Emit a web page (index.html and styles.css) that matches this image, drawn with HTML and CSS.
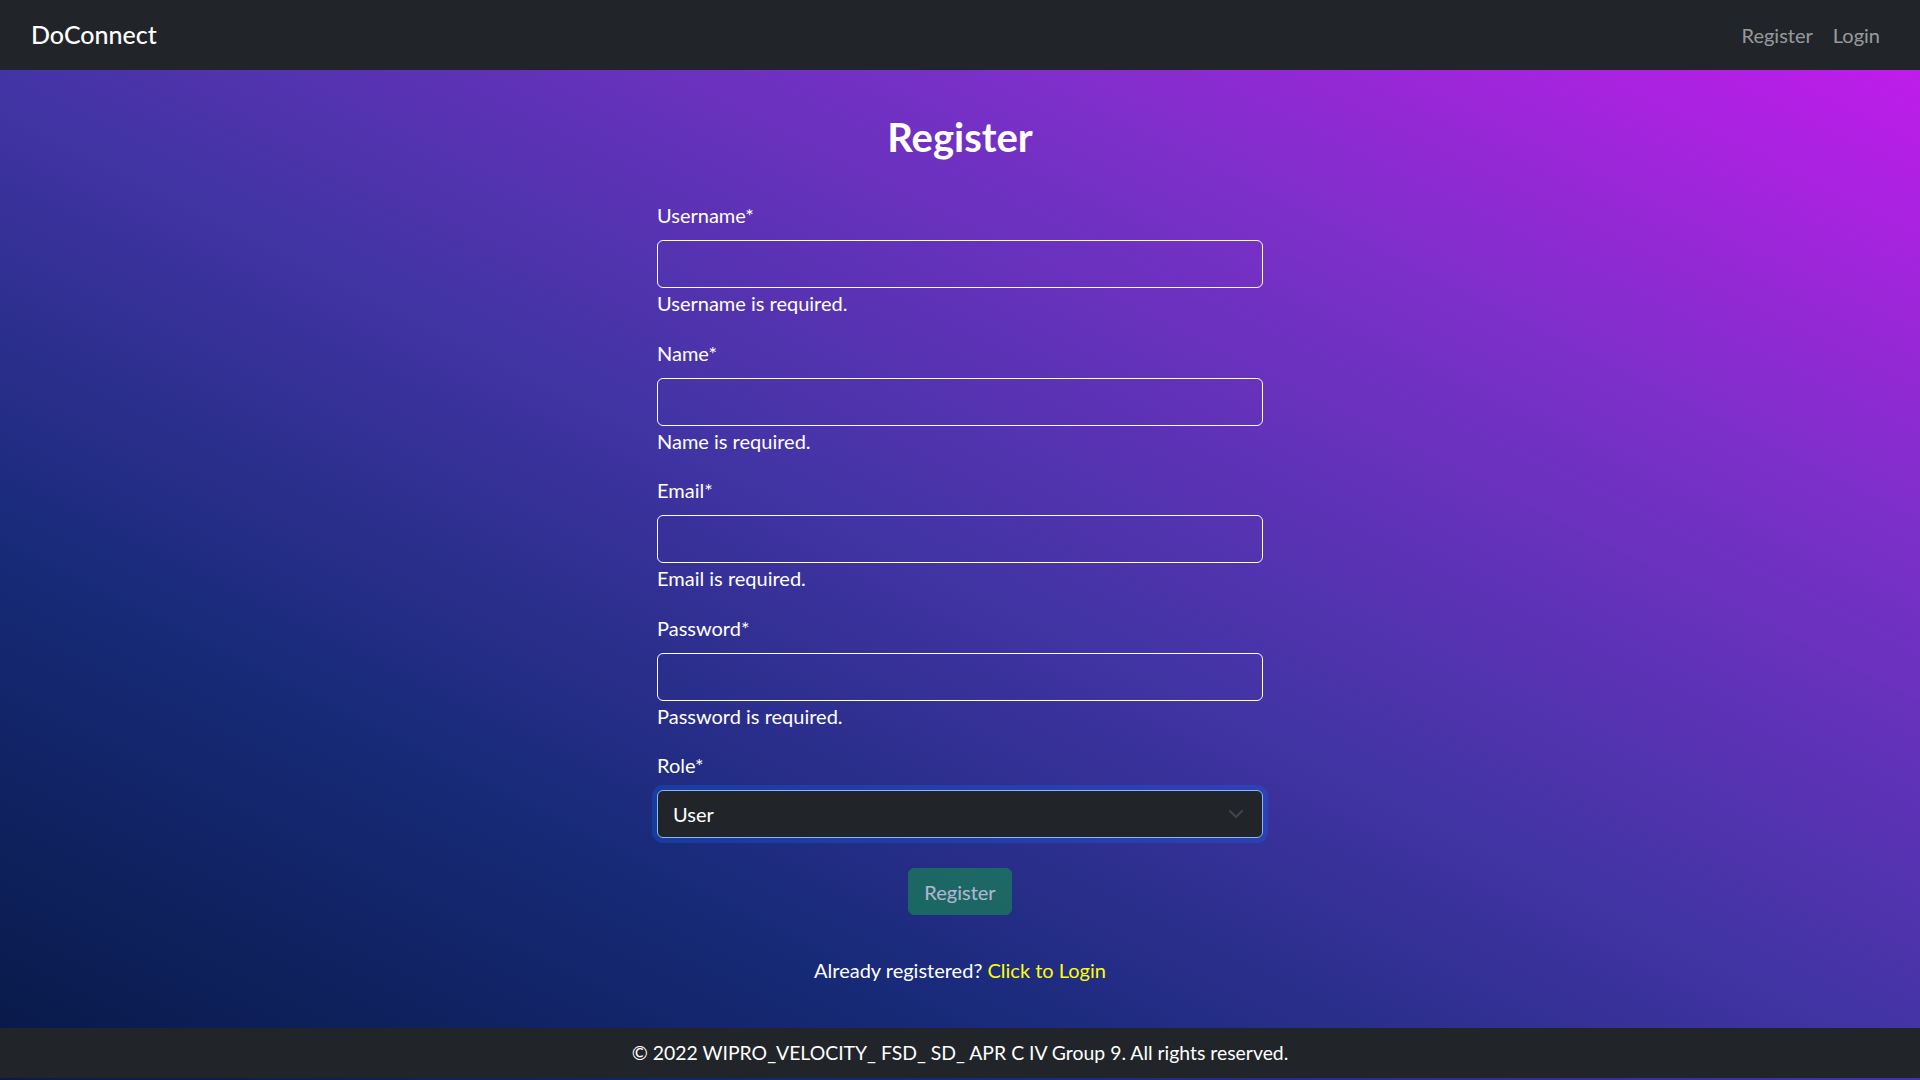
FILE: index.html
```html
<!DOCTYPE html>
<html lang="en">
<head>
<meta charset="utf-8">
<title>DoConnect</title>
<link rel="stylesheet" href="styles.css">
</head>
<body>
<nav class="navbar">
  <a class="brand" href="#">DoConnect</a>
  <div class="nav-links">
    <a class="nav-link" href="#">Register</a>
    <a class="nav-link" href="#">Login</a>
  </div>
</nav>
<main class="main">
  <h2 class="title">Register</h2>
  <form class="form">
    <div class="field">
      <label class="label">Username*</label>
      <input class="input" type="text">
      <div class="error">Username is required.</div>
    </div>
    <div class="field">
      <label class="label">Name*</label>
      <input class="input" type="text">
      <div class="error">Name is required.</div>
    </div>
    <div class="field">
      <label class="label">Email*</label>
      <input class="input" type="text">
      <div class="error">Email is required.</div>
    </div>
    <div class="field">
      <label class="label">Password*</label>
      <input class="input" type="password">
      <div class="error">Password is required.</div>
    </div>
    <div class="field">
      <label class="label">Role*</label>
      <div class="select">
        <span>User</span>
        <svg class="chev" width="16" height="16" viewBox="0 0 16 16"><path d="M2 5l6 6 6-6" fill="none" stroke="#3f454c" stroke-width="2" stroke-linecap="round" stroke-linejoin="round"/></svg>
      </div>
    </div>
    <div class="actions">
      <button class="btn" type="button" disabled>Register</button>
    </div>
    <p class="already">Already registered? <a class="login-link" href="#">Click to Login</a></p>
  </form>
</main>
<footer class="footer">© 2022 WIPRO_VELOCITY_ FSD_ SD_ APR C IV Group 9. All rights reserved.</footer>
<div class="tail"></div>
</body>
</html>
```
FILE: styles.css
```css
* { box-sizing: border-box; }
html, body { margin: 0; padding: 0; }
body {
  font-family: "Lato", "Open Sans", sans-serif;
  font-size: 20px;
  line-height: 1.5;
  color: #fff;
  background: linear-gradient(to top right, #091a4a 0%, #172a78 25%, #4434a6 50%, #7a30c8 75%, #c01ceb 100%);
  min-height: 1080px;
}
.navbar {
  height: 70px;
  background: #212529;
  display: flex;
  align-items: center;
  justify-content: space-between;
  padding: 0 30px 0 31px;
}
.brand {
  color: #fff;
  text-decoration: none;
  font-size: 25px;
  font-weight: 500;
}
.nav-links { display: flex; }
.nav-link {
  color: rgba(255,255,255,0.55);
  text-decoration: none;
  font-size: 20px;
  padding: 0 10px;
}
.main {
  height: 958px;
  padding-top: 43px;
  background: linear-gradient(to top right, #091a4a 0%, #172a78 25%, #4434a6 50%, #7a30c8 75%, #c01ceb 100%);
}
.title {
  margin: 0;
  text-align: center;
  font-size: 40px;
  line-height: 48px;
  font-weight: 700;
}
.form {
  width: 606px;
  margin: 39px auto 0;
}
.field {
  margin-bottom: 19.5px;
  display: flex;
  flex-direction: column;
}
.label {
  line-height: 30px;
  margin-bottom: 10px;
}
.input {
  height: 48px;
  background: transparent;
  border: 1px solid #fff;
  border-radius: 6px;
  font: inherit;
  color: #fff;
  padding: 0 15px;
}
.error { line-height: 30px; }
.select {
  height: 48px;
  background: #212529;
  border: 1px solid #86b7fe;
  border-radius: 6px;
  box-shadow: 0 0 0 5px rgba(13,110,253,0.25);
  display: flex;
  align-items: center;
  justify-content: space-between;
  padding: 0 18px 0 15px;
}
.chev { display: block; }
.actions {
  display: flex;
  justify-content: center;
  margin-top: 30px;
}
.btn {
  height: 47px;
  padding: 0 15px;
  font: inherit;
  color: #fff;
  background: #198754;
  border: 1px solid #198754;
  border-radius: 6px;
  opacity: 0.65;
}
.already {
  margin: 40px 0 0;
  text-align: center;
  line-height: 30px;
}
.login-link { color: #ffff00; text-decoration: none; }
.footer {
  height: 50px;
  background: #212529;
  display: flex;
  align-items: center;
  justify-content: center;
  font-size: 19.4px;
}
.tail { height: 2px; }
```
